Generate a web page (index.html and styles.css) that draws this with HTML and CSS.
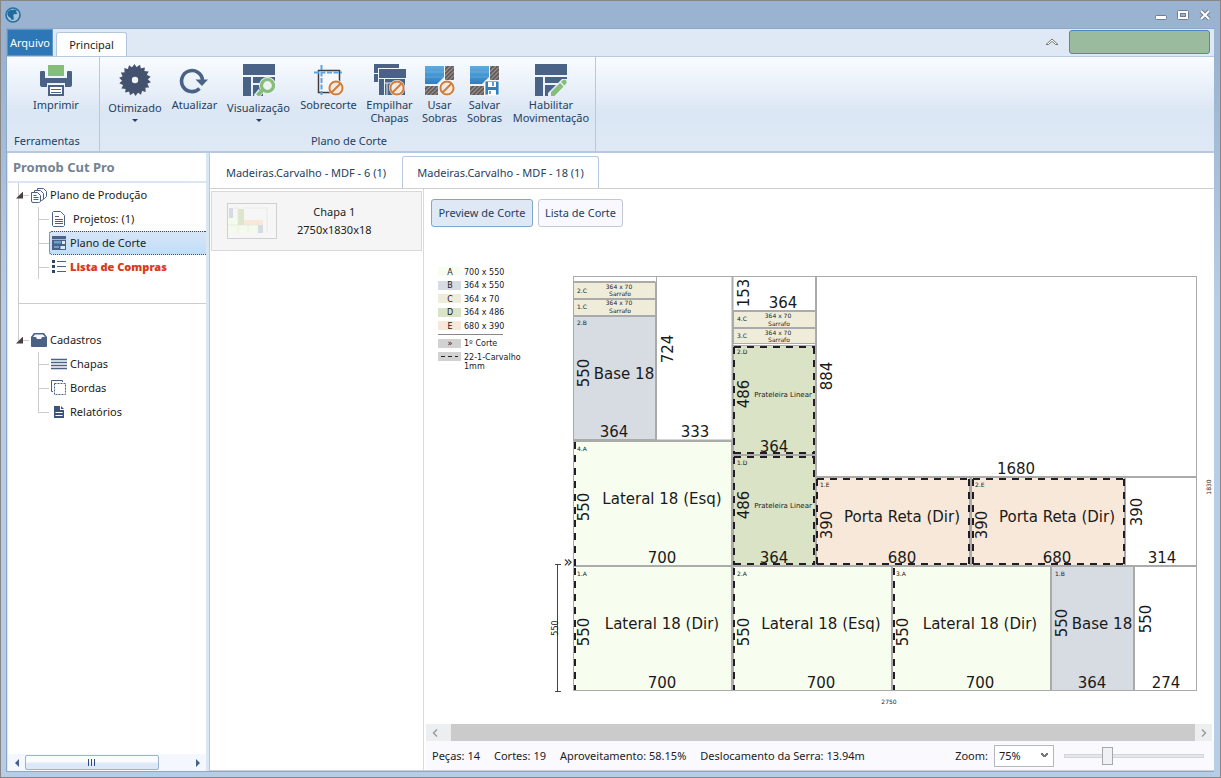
FILE: index.html
```html
<!DOCTYPE html>
<html lang="pt-BR">
<head>
<meta charset="utf-8">
<title>Promob Cut Pro</title>
<link rel="stylesheet" href="styles.css">
</head>
<body>
<svg class="defs" width="0" height="0" aria-hidden="true">
  <defs>
    <linearGradient id="blue" x1="0" y1="0" x2="0" y2="1"><stop offset="0" stop-color="#5dade3"/><stop offset="1" stop-color="#2f7fc0"/></linearGradient>
    <pattern id="hatch" width="3" height="3" patternUnits="userSpaceOnUse" patternTransform="rotate(45)"><rect width="3" height="3" fill="#9b9593"/><rect width="1.600" height="3" fill="#57504f"/></pattern>
    <symbol id="no" viewBox="0 0 16 16"><circle cx="8" cy="8" r="7" fill="#f5efe9" stroke="#fff" stroke-width="2"/><circle cx="8" cy="8" r="6.6" fill="#f3e9e0" stroke="#cf7c3a" stroke-width="2"/><path d="M3.5 12.5l9-9" stroke="#cf7c3a" stroke-width="2"/></symbol>
    <path id="tooth" d="M12.500 4L15.500 0l3.200 5z"/>
    <g id="teeth"><use href="#tooth"/><use href="#tooth" transform="rotate(20 16 16)"/><use href="#tooth" transform="rotate(40 16 16)"/></g>
  </defs>
</svg>
<div class="window">
  <header class="titlebar">
    <svg class="app-icon" viewBox="0 0 16 16" width="16" height="16"><circle cx="8" cy="8" r="7" fill="#a9c3da" stroke="#2272a3" stroke-width="1.6"/><path d="M3 4.5L6 2.5l1.5.8L9 2.3l3 1.2-1 1.3 1.500 2-2.200.5-.8-.6-1.200 1.600.6 4.200-2.500.3L5.600 11 3.400 9.600 2.200 7z" fill="#1f6c9c"/></svg>
    <div class="win-buttons">
      <button type="button" aria-label="Minimizar"><svg viewBox="0 0 14 12" width="14" height="12"><rect x="1.5" y="6.500" width="11" height="4" rx="1" fill="#fff" stroke="#6d7f97"/></svg></button>
      <button type="button" aria-label="Maximizar"><svg viewBox="0 0 14 12" width="14" height="12"><rect x="1.5" y="1.500" width="11" height="9" rx="1" fill="#fff" stroke="#6d7f97"/><rect x="4.500" y="4.500" width="5" height="3" fill="#9ab3d0" stroke="#6d7f97"/></svg></button>
      <button type="button" aria-label="Fechar"><svg viewBox="0 0 14 12" width="14" height="12"><path d="M3 2l8 8M11 2l-8 8" stroke="#6d7f97" stroke-width="4"/><path d="M3 2l8 8M11 2l-8 8" stroke="#fff" stroke-width="2"/></svg></button>
    </div>
  </header>

  <div class="client">
    <nav class="tabs-row">
      <button type="button" class="file-tab">Arquivo</button>
      <button type="button" class="ribbon-tab">Principal</button>
      <button type="button" class="collapse" aria-label="Recolher"><svg viewBox="0 0 14 8" width="14" height="8"><path d="M1 6.500h2.500L7 3.300l3.500 3.200H13L7 1z" fill="#fff" stroke="#777" stroke-width="1"/></svg></button>
      <div class="badge"></div>
    </nav>

    <section class="ribbon">
      <div class="group tools">
        <div class="buttons">
          <button type="button" class="cmd"><svg viewBox="0 0 32 32" width="32" height="32"><rect x="8" y="1" width="16" height="11" fill="#86bd78"/><path d="M0 8q0-1 1-1h3q1 0 1 1v6h22V8q0-1 1-1h3q1 0 1 1v13q0 2-2 2h-5v-4H7v4H2q-2 0-2-2z" fill="#4a6285"/><rect x="9" y="22" width="14" height="9" fill="#fff" stroke="#4a6285" stroke-width="2"/><path d="M11 25.500h10M11 28.500h10" stroke="#4a6285"/></svg><span>Imprimir</span></button>
        </div>
        <div class="caption">Ferramentas</div>
      </div>
      <div class="group">
        <div class="buttons">
          <button type="button" class="cmd drop w64"><svg viewBox="0 0 32 32" width="32" height="32"><g fill="#44526f"><circle cx="16" cy="16" r="12.500"/><use href="#teeth"/><use href="#teeth" transform="rotate(60 16 16)"/><use href="#teeth" transform="rotate(120 16 16)"/><use href="#teeth" transform="rotate(180 16 16)"/><use href="#teeth" transform="rotate(240 16 16)"/><use href="#teeth" transform="rotate(300 16 16)"/></g><circle cx="16" cy="16" r="3.200" fill="#f0f5fb"/></svg><span>Otimizado</span><i class="arrow"></i></button>
          <button type="button" class="cmd w55"><svg viewBox="0 0 32 32" width="32" height="32"><path d="M20.500 24.500A10.500 10.500 0 1 1 23.500 16" fill="none" stroke="#4a6285" stroke-width="3.600"/><path d="M16.500 15.500H29L23 22z" fill="#4a6285"/></svg><span>Atualizar</span></button>
          <button type="button" class="cmd drop w73"><svg viewBox="0 0 32 32" width="32" height="32"><path d="M0 0h32v11H0zM0 13h8v19H0zM10 13h22v6H10zM10 21h10v11H10z" fill="#4a6285"/><circle cx="24.500" cy="21.500" r="8.500" fill="#e8eff8"/><path d="M18 27l-5 6" stroke="#e8eff8" stroke-width="6"/><circle cx="24.500" cy="21.500" r="6" fill="#edf3f3" stroke="#86bd78" stroke-width="3.200"/><path d="M19.500 26l-5 5.500" stroke="#86bd78" stroke-width="4"/></svg><span>Visualização</span><i class="arrow"></i></button>
          <button type="button" class="cmd w67"><svg viewBox="0 0 32 32" width="32" height="32"><rect x="5.500" y="6.500" width="21" height="22" fill="#f7f8fb" stroke="#443b3d" stroke-width="1.500"/><path d="M8.500 1v30M1 8.500h28" stroke="#5aa5e6" stroke-width="2" stroke-dasharray="5 1.500"/><use href="#no" x="15" y="16" width="16" height="16"/></svg><span>Sobrecorte</span></button>
          <button type="button" class="cmd w55"><svg viewBox="0 0 32 32" width="32" height="32"><path d="M0 0h25v4H4v5H0zM0 10h4v8H0z" fill="#4a6285"/><path d="M5 5h27v9H5zM5 15h5v16H5zM11 15h20v16H11z" fill="#4a6285"/><path d="M11 19h6M13 19v12" stroke="#e8eff8"/><use href="#no" x="15" y="16" width="16" height="16"/></svg><span>Empilhar<br>Chapas</span></button>
          <button type="button" class="cmd w45"><svg viewBox="0 0 32 32" width="32" height="32"><path d="M1 2h19v11l-7 7H1z" fill="url(#blue)"/><path d="M1 8h19M1 13h19" stroke="#7dbde9" opacity=".5"/><path d="M21 2h9v14h-9zM1 22h13v9H1z" fill="url(#hatch)"/><use href="#no" x="15" y="16" width="16" height="16"/></svg><span>Usar<br>Sobras</span></button>
          <button type="button" class="cmd w45"><svg viewBox="0 0 32 32" width="32" height="32"><path d="M1 2h19v11l-7 7H1z" fill="url(#blue)"/><path d="M1 8h19M1 13h19" stroke="#7dbde9" opacity=".5"/><path d="M21 2h9v14h-9zM1 22h14v9H1z" fill="url(#hatch)"/><path d="M16 17h13l1 1v13H16z" fill="#2f80bf" stroke="#fff" stroke-width=".8"/><path d="M19 18h8v5h-8zM19 26h8v5h-8z" fill="#fff"/><path d="M21 27v3M24 18v4" stroke="#2f80bf" stroke-width="1.500"/></svg><span>Salvar<br>Sobras</span></button>
          <button type="button" class="cmd w88"><svg viewBox="0 0 32 32" width="32" height="32"><path d="M0 0h32v11H0zM0 13h8v19H0zM10 13h22v6H10zM10 21h12v11H10z" fill="#4a6285"/><path d="M13 29L27 15h6v5L21 33h-8z" fill="#e8eff8"/><path d="M16 28l9-9 3.500 3.500-9 9.500H16zM26 18l2-2q2-1 3.500 1v2l-2 2.500z" fill="#86bd78"/></svg><span>Habilitar<br>Movimentação</span></button>
        </div>
        <div class="caption center">Plano de Corte</div>
      </div>
    </section>

    <div class="workspace">
      <aside class="sidebar">
        <h1>Promob Cut Pro</h1>
        <div class="tree">
          <div class="node root first"><i class="expander"></i><svg viewBox="0 0 16 16" width="16" height="16" fill="#fff" stroke="#4a6285"><path d="M6.500 1.500h6l3 3v5l-2 2h-7z"/><path d="M3.500 3.500h6l3 3v6l-2 1h-7z"/><path d="M.5 5.500h6l3 3v6q-1 1-2 1H2q-1.500 0-1.500-1.500z"/><path d="M2.500 8.500h3M2.500 10.500h5M2.500 12.500h5"/></svg><span>Plano de Produção</span></div>
          <div class="node child"><svg viewBox="0 0 16 16" width="16" height="16" fill="#fff" stroke="#4a6285"><path d="M2.500.5h7l4 4v10l-1 1h-10l-1-1v-13z"/><path d="M4 5.500h4M4 8.500h8M4 10.500h8M4 12.500h8"/></svg><span class="indent">Projetos: (1)</span></div>
          <div class="node child"><a class="selected" href="#plano"><svg viewBox="0 0 16 16" width="16" height="16"><path d="M1 1h14v14H1z" fill="#4a6285"/><path d="M1 4.500h14" stroke="#9dbbd8"/><path d="M3 6h7v2.500H3zM3 11h5v2H3z" fill="#6fa0cc"/><path d="M11 6h3v3h-3zM9.500 11H14v3H9.500z" fill="#dcebf8"/></svg><span>Plano de Corte</span></a></div>
          <div class="node child last"><svg viewBox="0 0 16 16" width="16" height="16"><path d="M1 1h3v3H1zM1 6h3v3H1zM1 11h3v3H1z" fill="#2d4569"/><path d="M6 2.500h9M6 7.500h9M6 12.500h9" stroke="#4a6285" stroke-width="1.200"/></svg><span class="alert">Lista de Compras</span></div>
          <div class="break"></div>
          <div class="node root second"><i class="expander"></i><svg viewBox="0 0 16 16" width="16" height="16"><path d="M0 5L3 1h10l3 4v9q0 1-1 1H1q-1 0-1-1z" fill="#4a6285"/><path d="M2 5l2-2.500h8L14 5h-3l-1 2H6L5 5z" fill="#f4f7fb"/></svg><span>Cadastros</span></div>
          <div class="node child"><svg viewBox="0 0 16 16" width="16" height="16"><path d="M0 3.500h16M0 6.500h16M0 9.500h16M0 12.500h16" stroke="#4a6285" stroke-width="1.300"/></svg><span>Chapas</span></div>
          <div class="node child"><svg viewBox="0 0 16 16" width="16" height="16" fill="none" stroke="#4a6285"><path d="M2 11.500H.5V.5h11V2"/><path d="M3.500 3.500h11v11h-11z" stroke-dasharray="2 1"/></svg><span>Bordas</span></div>
          <div class="node child end"><svg viewBox="0 0 16 16" width="16" height="16"><path d="M3 2h6v4h4v8H3z" fill="#3c5478"/><path d="M10 2l3 3h-3z" fill="#3c5478"/><path d="M4.500 8.500h7M4.500 11.500h7" stroke="#fff"/></svg><span>Relatórios</span></div>
        </div>
        <div class="hscroll"><button type="button" aria-label="Esquerda"><i class="tri left"></i></button><div class="rail"><div class="grip"><i></i><i></i><i></i></div></div><button type="button" aria-label="Direita"><i class="tri right"></i></button></div>
      </aside>

      <main class="main">
        <div class="doc-tabs"><button type="button">Madeiras.Carvalho - MDF - 6 (1)</button><button type="button" class="on">Madeiras.Carvalho - MDF - 18 (1)</button></div>
        <div class="panes">
          <div class="sheets">
            <button type="button" class="sheet">
              <svg viewBox="0 0 50 36" width="50" height="36"><rect x=".5" y=".5" width="49" height="35" fill="#f6f6f6" stroke="#d0d0d0"/><path d="M1 15h10v7h20v8H1z" fill="#f4fbec"/><path d="M2 5h4v10H2zM31 22h5v8h-5z" fill="#d5dae3"/><path d="M11 6h6v16h-6z" fill="#dde5cc"/><path d="M17 17h19v5H17z" fill="#f7e8da"/><path d="M11 22v8M21 22v8M31 22v8M1 22h30M17 5h23v25M6 5h5v17" fill="none" stroke="#e4e8e0" stroke-width=".7"/></svg>
              <span>Chapa 1<br>2750x1830x18</span>
            </button>
          </div>
          <div class="viewer">
            <div class="toolbar"><button type="button" class="active">Preview de Corte</button><button type="button">Lista de Corte</button></div>
            <div class="canvas">
              <svg class="plan" viewBox="424 232 790 490" role="img" aria-label="Plano de corte 2750 x 1830">
                <g class="legend">
                  <path class="fa" d="M438 267h23v9h-23z"/><path class="fb" d="M438 281h23v9h-23z"/><path class="fc" d="M438 294h23v9h-23z"/><path class="fd" d="M438 308h23v9h-23z"/><path class="fe" d="M438 321h23v9h-23z"/>
                  <path fill="#d2d2d2" d="M438 339h23v9h-23zM438 352h23v9h-23z"/>
                  <path d="M438 334.500h65" stroke="#888"/><path d="M441 356.500h17" stroke="#222" stroke-dasharray="4 3"/>
                  <g text-anchor="middle"><text x="450" y="275">A</text><text x="450" y="288">B</text><text x="450" y="302">C</text><text x="450" y="315">D</text><text x="450" y="329">E</text><text x="450" y="346">»</text></g>
                  <text x="464" y="275">700 x 550</text><text x="464" y="288">364 x 550</text><text x="464" y="302">364 x 70</text><text x="464" y="315">364 x 486</text><text x="464" y="329">680 x 390</text><text x="464" y="346">1º Corte</text><text x="464" y="360">22-1-Carvalho</text><text x="464" y="369">1mm</text>
                </g>
                <g class="parts">
                  <rect class="waste" x="573.500" y="276.500" width="623" height="414"/>
                  <path class="waste" d="M573.500 281.500h82M656.500 276.500h76v164h-76zM732.500 276.500h83v34h-83zM816.500 276.500h380v200h-380zM1125.500 477.500h71v88h-71zM1134.500 566.500h62v124h-62z"/>
                  <rect class="fc" x="573.500" y="282.500" width="82" height="16"/><rect class="fc" x="573.500" y="299.500" width="82" height="16"/>
                  <rect class="fb" x="573.500" y="316.500" width="82" height="123"/>
                  <rect class="fc" x="733.500" y="311.500" width="82" height="16"/><rect class="fc" x="733.500" y="328.500" width="82" height="15"/>
                  <rect class="fd" x="733.500" y="345.500" width="82" height="109"/><rect class="fd" x="733.500" y="455.500" width="82" height="110"/>
                  <rect class="fa" x="573.500" y="441.500" width="158" height="124"/>
                  <rect class="fe" x="816.500" y="477.500" width="153" height="88"/><rect class="fe" x="971.500" y="477.500" width="153" height="88"/>
                  <rect class="fa" x="573.500" y="566.500" width="158" height="124"/><rect class="fa" x="733.500" y="566.500" width="158" height="124"/><rect class="fa" x="892.500" y="566.500" width="158" height="124"/>
                  <rect class="fb" x="1051.500" y="566.500" width="82" height="124"/>
                </g>
                <path class="cut" d="M732.500 276v414M573 440.500h159M573 566h624M816 276v290M816 477h381M970.500 477v89"/>
                <path class="edge" d="M575 442v124M575 568v122M734 568v122M894 568v122M734 347v107M814 347v107M734 347h81M734 453h81M734 457v108M814 457v108M734 457h81M734 564h81M817 479v86M969 479v86M817 479h152M817 564h152M973 479v86M1124 479v86M973 479h151M973 564h151"/>
                <path d="M557.500 564v128M555 564.500h6M555 691.500h6" stroke="#444" fill="none"/>
                <g class="big">
                  <text x="624" y="379">Base 18</text><text x="662" y="504">Lateral 18 (Esq)</text><text x="662" y="629">Lateral 18 (Dir)</text><text x="821" y="629">Lateral 18 (Esq)</text><text x="980" y="629">Lateral 18 (Dir)</text><text x="1102" y="629">Base 18</text><text x="902" y="522">Porta Reta (Dir)</text><text x="1057" y="522">Porta Reta (Dir)</text>
                  <text x="614" y="437">364</text><text x="695" y="437">333</text><text x="783" y="308">364</text><text x="774" y="452">364</text><text x="774" y="563">364</text><text x="662" y="563">700</text><text x="902" y="563">680</text><text x="1057" y="563">680</text><text x="1162" y="563">314</text><text x="1016" y="474">1680</text>
                  <text x="662" y="688">700</text><text x="821" y="688">700</text><text x="980" y="688">700</text><text x="1092" y="688">364</text><text x="1166" y="688">274</text>
                  <text transform="translate(589 373) rotate(-90)">550</text><text transform="translate(673 349) rotate(-90)">724</text><text transform="translate(749 293) rotate(-90)">153</text><text transform="translate(832 376) rotate(-90)">884</text><text transform="translate(749 394) rotate(-90)">486</text><text transform="translate(749 505) rotate(-90)">486</text><text transform="translate(589 507) rotate(-90)">550</text><text transform="translate(589 632) rotate(-90)">550</text><text transform="translate(749 632) rotate(-90)">550</text><text transform="translate(908 632) rotate(-90)">550</text><text transform="translate(1067 623) rotate(-90)">550</text><text transform="translate(1151 619) rotate(-90)">550</text><text transform="translate(832 525) rotate(-90)">390</text><text transform="translate(987 525) rotate(-90)">390</text><text transform="translate(1142 512) rotate(-90)">390</text>
                  <text x="568" y="567">»</text>
                </g>
                <g class="mid"><text x="783" y="397">Prateleira Linear</text><text x="783" y="508">Prateleira Linear</text><text class="side" transform="translate(558 628) rotate(-90)">550</text></g>
                <g class="tiny">
                  <text x="577" y="293">2.C</text><text x="577" y="309">1.C</text><text x="577" y="325">2.B</text><text x="577" y="451">4.A</text><text x="577" y="576">1.A</text><text x="737" y="576">2.A</text><text x="896" y="576">3.A</text><text x="1055" y="576">1.B</text><text x="737" y="321">4.C</text><text x="737" y="338">3.C</text><text x="737" y="354">2.D</text><text x="737" y="465">1.D</text><text x="820" y="487">1.E</text><text x="975" y="487">2.E</text>
                  <g text-anchor="middle"><text x="619" y="289">364 x 70</text><text x="620" y="296">Sarrafo</text><text x="619" y="305">364 x 70</text><text x="620" y="313">Sarrafo</text><text x="778" y="318">364 x 70</text><text x="779" y="326">Sarrafo</text><text x="778" y="335">364 x 70</text><text x="779" y="342">Sarrafo</text><text x="889" y="704">2750</text><text transform="translate(1211 487) rotate(-90)">1830</text></g>
                </g>
              </svg>
            </div>
            <div class="plan-scroll"><button type="button" aria-label="Esquerda"><svg viewBox="0 0 8 10" width="8" height="10"><path d="M6 1.500L2.500 5 6 8.500" fill="none" stroke="#999" stroke-width="1.400"/></svg></button><div class="bar"></div><button type="button" aria-label="Direita"><svg viewBox="0 0 8 10" width="8" height="10"><path d="M2 1.500L5.500 5 2 8.500" fill="none" stroke="#999" stroke-width="1.400"/></svg></button></div>
            <footer class="status">
              <span>Peças: 14</span><span>Cortes: 19</span><span>Aproveitamento: 58.15%</span><span>Deslocamento da Serra: 13.94m</span>
              <label class="zoom-label" for="zoom">Zoom:</label>
              <select id="zoom"><option>75%</option></select>
              <input type="range" aria-label="Nível de zoom" min="0" max="100" value="29">
            </footer>
          </div>
        </div>
      </main>
    </div>
  </div>
</div>
</body>
</html>
```
FILE: styles.css
```css
* { box-sizing: border-box; }
html, body { height: 100%; margin: 0; }
body, button, select { font-family: "Noto Sans", "Open Sans", sans-serif; font-size: 11px; color: #1c1c1c; }
button { margin: 0; padding: 0; border: 0; background: none; line-height: 16px; }
svg { display: block; flex: none; }
.defs { position: absolute; }

.window { display: flex; flex-direction: column; height: 100%; padding: 0 6px 5px 5px; border: 1px solid #8a8585; background: linear-gradient(#9ab3d0, #9ab3d0 60px, #b5cde6 300px, #b5cde6); }
.titlebar { display: flex; justify-content: space-between; align-items: center; height: 27px; flex: none; }
.app-icon { margin-left: -1px; }
.win-buttons { display: flex; gap: 8px; padding-right: 2px; }
.client { display: flex; flex-direction: column; flex: 1; min-height: 0; border: 1px solid #8ea7c5; border-right-width: 0; background: #dfe9f5; }

.tabs-row { display: flex; align-items: flex-end; gap: 3px; height: 27px; flex: none; padding-right: 4px; }
.file-tab { width: 46px; height: 27px; background: #2d77b7; border: 1px solid #5b97cb; color: #fff; }
.ribbon-tab { width: 71px; height: 24px; background: #fff; border: 1px solid #b4c6de; border-bottom: 0; border-radius: 3px 3px 0 0; }
.collapse { margin: 0 7px 10px auto; }
.badge { width: 141px; height: 24px; margin-bottom: 2px; background: #9abb9e; border: 1px solid #4f87bd; border-radius: 3px; }

.ribbon { display: flex; height: 97px; flex: none; background: linear-gradient(#f9fcff, #dbe6f4 60%, #dfe9f6); border-top: 1px solid #b8c9df; border-bottom: 2px solid #b8c9df; }
.group { display: flex; flex-direction: column; justify-content: space-between; padding: 7px 0 1px 3px; border-right: 1px solid #b8c9df; }
.tools { width: 93px; padding-left: 7px; }
.buttons { display: flex; align-items: flex-start; }
.cmd { display: flex; flex-direction: column; align-items: center; gap: 2px; line-height: 13px; color: #24415f; white-space: nowrap; }
.drop { gap: 5px; }
.tools .cmd { width: 84px; }
.w45 { width: 45px; } .w55 { width: 55px; } .w64 { width: 64px; } .w67 { width: 67px; } .w73 { width: 73px; } .w88 { width: 88px; }
.arrow { border: 3px solid transparent; border-top-color: #263f61; border-bottom: 0; }
.caption { line-height: 18px; color: #24415f; }
.center { text-align: center; }

.workspace { display: flex; flex: 1; min-height: 0; }
.sidebar { display: flex; flex-direction: column; width: 202px; flex: none; border-right: 3px solid #dbe6f4; border-left: 1px solid #dbe6f4; background: #fff; }
.sidebar h1 { margin: 0; height: 30px; padding-left: 5px; border-bottom: 2px solid #dbe6f4; font-size: 13px; line-height: 28px; color: #738291; }
.tree { flex: 1; min-height: 0; overflow: hidden; background: linear-gradient(#ccc, #ccc) 10px 0 / 1px 158px no-repeat; }
.node { display: flex; align-items: center; gap: 3px; height: 24px; line-height: 22px; white-space: nowrap; }
.root { padding-left: 8px; background: linear-gradient(#ccc, #ccc) 15px 12px / 6px 1px no-repeat; }
.expander { width: 7px; height: 7px; margin-right: 5px; background: #4a3f45; clip-path: polygon(100% 0, 100% 100%, 0 100%); }
.child { padding-left: 43px; background: linear-gradient(#ccc, #ccc) 30px 0 / 1px 24px no-repeat, linear-gradient(#ccc, #ccc) 30px 12px / 11px 1px no-repeat; }
.end { background-size: 1px 12px, 11px 1px; }
.indent { padding-left: 3px; }
.selected { display: flex; align-items: center; gap: 3px; flex: 1; height: 24px; margin-left: -2px; padding-left: 1px; border: 1px dotted #34506f; border-right: 0; border-radius: 3px 0 0 3px; background: linear-gradient(#d8e5f7, #bedff8); color: inherit; text-decoration: none; }
.alert { color: #da3a1c; font-weight: 900; }
.break { height: 49px; background: linear-gradient(#ccc, #ccc) 10px 24px / 100% 1px no-repeat; }
.hscroll { display: flex; align-items: center; height: 17px; background: #f4f8fe; }
.hscroll button { width: 17px; height: 16px; display: grid; place-items: center; }
.rail { flex: 1; }
.grip { display: flex; justify-content: center; align-items: center; gap: 1px; width: 82%; height: 15px; border: 1px solid #9bb2d0; border-radius: 2px; background: linear-gradient(#fafdff 40%, #dce8f5 60%); }
.grip i { width: 1px; height: 7px; margin-right: 1px; background: #2e4a7a; }
.tri { border: 4px solid transparent; }
.left { border-right-color: #44618c; border-left: 0; }
.right { border-left-color: #44618c; border-right: 0; }

.main { display: flex; flex-direction: column; flex: 1; min-width: 0; background: #fff; border-left: 1px solid #b8c9df; }
.doc-tabs { display: flex; align-items: flex-end; height: 36px; flex: none; border-bottom: 1px solid #cfcfcf; }
.doc-tabs button { height: 32px; min-width: 192px; padding: 0 10px; color: #24415f; white-space: nowrap; border: 1px solid transparent; border-bottom: 0; }
.doc-tabs .on { min-width: 197px; border-color: #b4c9e0; border-radius: 3px 3px 0 0; background: #fff; }
.panes { display: flex; flex: 1; min-height: 0; border-bottom: 1px solid #d0d0d0; }
.sheets { width: 214px; flex: none; padding: 2px 1px; border-right: 1px solid #dadada; }
.sheet { display: flex; align-items: center; width: 100%; height: 60px; padding: 0 15px; gap: 20px; background: #f5f5f5; border: 1px solid #d9d9d9; line-height: 18px; }
.viewer { display: flex; flex-direction: column; flex: 1; min-width: 0; }
.toolbar { display: flex; gap: 5px; height: 43px; flex: none; padding: 10px 7px 5px; }
.toolbar button { height: 28px; min-width: 85px; padding: 0 5px; border: 1px solid #c3c7d2; border-radius: 3px; background: #f8f8fe; color: #24415f; white-space: nowrap; }
.toolbar .active { min-width: 102px; background: #dfe9f5; border-color: #7da7cb; }
.canvas { flex: 1; min-height: 0; overflow: hidden; }
.plan { width: 100%; }
.plan text { font-family: "DejaVu Sans", sans-serif; fill: #1a1a1a; }
.legend { font-size: 8px; }
.big { font-size: 15px; text-anchor: middle; }
.mid { font-size: 7px; text-anchor: middle; }
.side { font-size: 8px; }
.tiny { font-size: 6px; }
.parts { stroke: #a9aaa9; }
.waste { fill: #fff; }
.fa { fill: #f8feef; } .fb { fill: #d7dbe2; } .fc { fill: #efedda; } .fd { fill: #dae3c5; } .fe { fill: #f8e8d9; }
.cut { fill: none; stroke: #aaaca9; stroke-width: 2px; }
.edge { fill: none; stroke: #221c25; stroke-width: 2px; stroke-dasharray: 7px 6px; }
.plan-scroll { display: flex; height: 17px; flex: none; margin: 0 2px; background: #edeef0; }
.plan-scroll button { width: 17px; display: grid; place-items: center; }
.plan-scroll button:first-child { margin-right: 8px; }
.bar { flex: 1; background: #cbcbcb; }
.status { display: flex; align-items: center; gap: 14px; height: 29px; flex: none; margin-left: 2px; padding: 0 10px 0 6px; background: #f9f9fe; white-space: nowrap; }
.zoom-label { margin-left: auto; margin-right: -8px; }
.status select { width: 60px; height: 22px; padding: 0 4px; appearance: none; border: 1px solid #b3b8be; border-radius: 0; background: linear-gradient(45deg, transparent 35%, #777 35%, #777 65%, transparent 65%) 46px 7px / 4px 4px no-repeat, linear-gradient(-45deg, transparent 35%, #777 35%, #777 65%, transparent 65%) 49px 7px / 4px 4px no-repeat, #fff; }
.status input { appearance: none; width: 140px; height: 18px; margin: 0 0 0 -4px; background: none; }
.status input::-webkit-slider-runnable-track { height: 4px; background: #e5e6e9; border: 1px solid #d3d5d9; }
.status input::-webkit-slider-thumb { appearance: none; width: 11px; height: 18px; margin-top: -8px; background: #f0f1f3; border: 1px solid #a6a8ac; }
```
